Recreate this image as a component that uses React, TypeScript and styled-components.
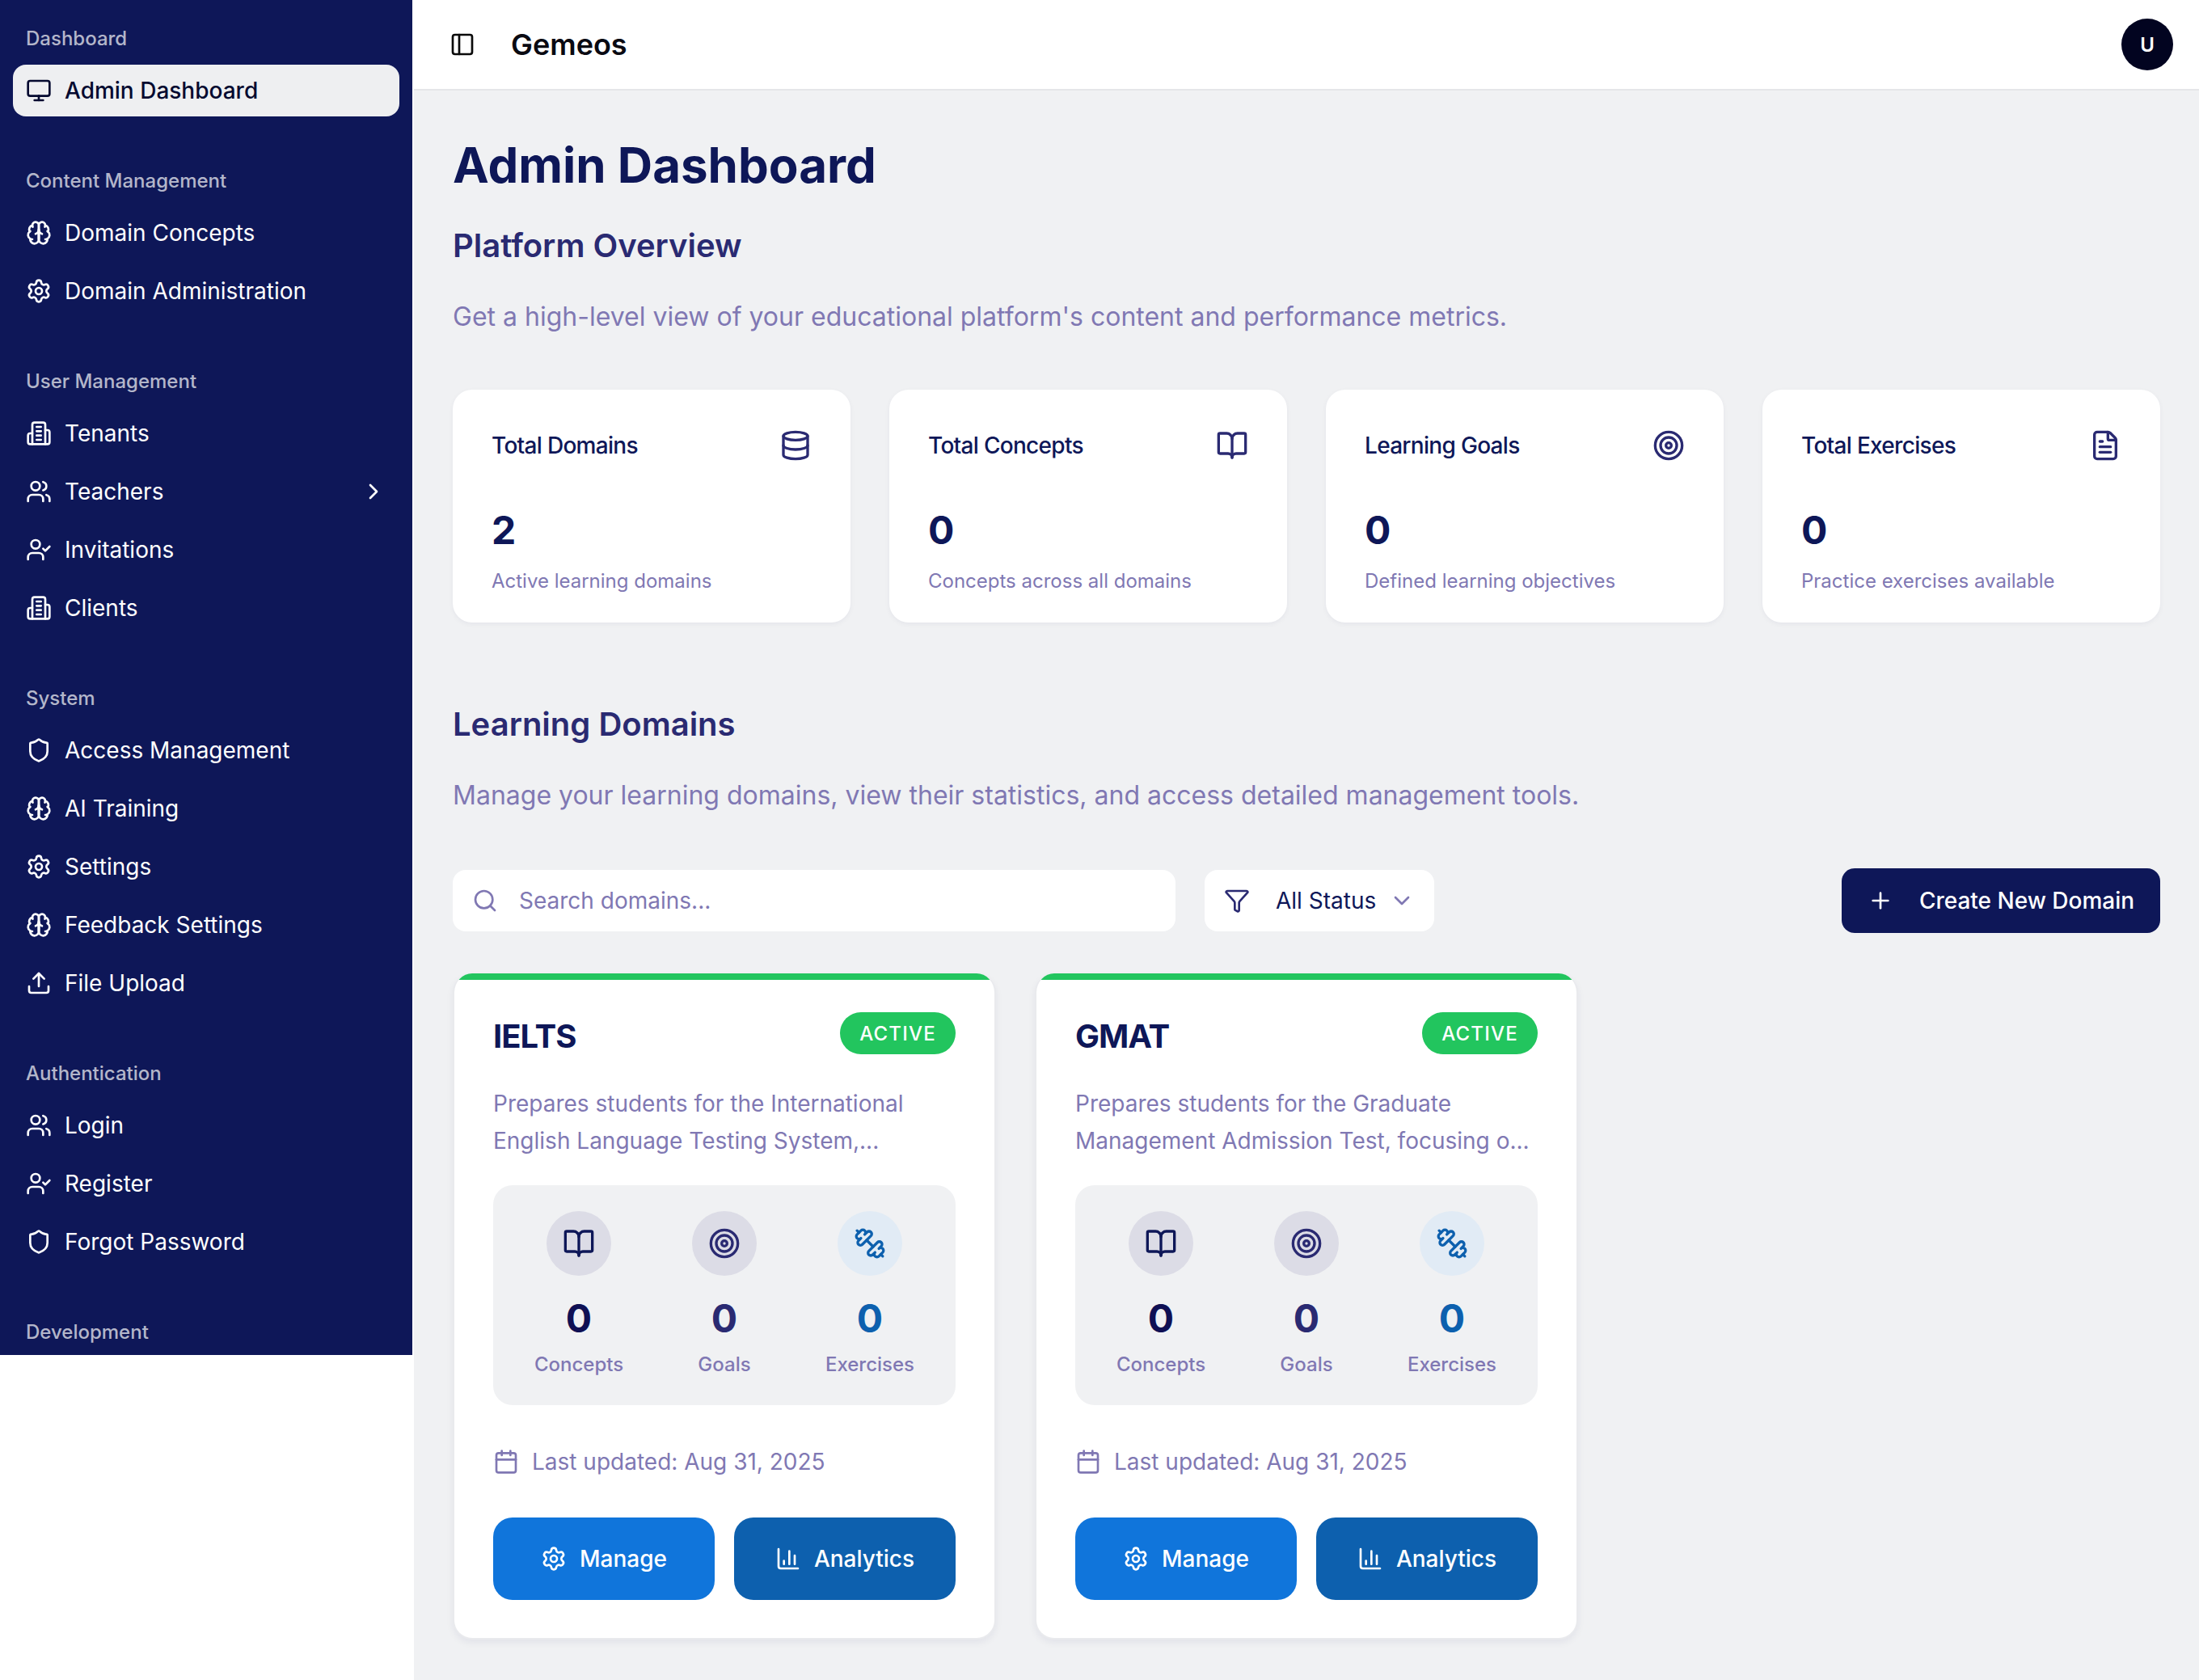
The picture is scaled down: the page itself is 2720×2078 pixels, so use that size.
import type { ComponentType } from 'react';
import styled, { createGlobalStyle } from 'styled-components';
import {
  BookOpen,
  Calendar,
  ChartColumn,
  ChevronDown,
  ChevronRight,
  Database,
  FileText,
  Funnel,
  Monitor,
  PanelLeft,
  Plus,
  Search,
  Settings,
  Shield,
  Target,
  Upload,
  UserCheck,
  Users,
} from 'lucide-react';

const NAVY = '#0e1758';
const INDIGO = '#2a2a72';
const MUTED = '#8078b3';
const BLUE = '#0d60ae';

const GlobalStyle = createGlobalStyle`
  * { box-sizing: border-box; }
  html, body {
    margin: 0;
    background: #fff;
    font-family: Inter, "Liberation Sans", sans-serif;
  }
`;

const Page = styled.div`
  width: 2720px;
  height: 2078px;
  display: grid;
  grid-template-columns: 512px 1fr;
  overflow: hidden;
`;

const SidebarColumn = styled.aside`
  background: #fff;
`;

const Sidebar = styled.nav`
  width: 510px;
  height: 1676px;
  overflow: hidden;
  background: ${NAVY};
  display: flex;
  flex-direction: column;
  gap: 16px;
`;

const NavGroup = styled.div`
  padding: 16px;
  display: flex;
  flex-direction: column;
`;

const NavLabel = styled.div`
  height: 64px;
  padding: 0 16px 2px;
  display: flex;
  align-items: center;
  font-size: 24px;
  font-weight: 500;
  color: rgba(255, 255, 255, 0.7);
`;

const NavList = styled.div`
  display: flex;
  flex-direction: column;
  gap: 8px;
`;

const NavItem = styled.a<{ $active?: boolean }>`
  height: 64px;
  padding: 0 16px;
  border-radius: 16px;
  display: flex;
  align-items: center;
  gap: 16px;
  font-size: 28px;
  font-weight: ${({ $active }) => ($active ? 500 : 400)};
  background: ${({ $active }) => ($active ? '#eeeff1' : 'transparent')};
  color: ${({ $active }) => ($active ? '#050a30' : '#fff')};
`;

const NavText = styled.span`
  flex: 1;
`;

const Main = styled.main`
  background: #f0f1f3;
  min-width: 0;
`;

const Header = styled.header`
  height: 112px;
  background: #fff;
  border-bottom: 2px solid #e5e6e9;
  padding: 0 32px 0 44px;
  display: flex;
  align-items: center;
  gap: 44px;
  color: #0a0a0a;
`;

const Brand = styled.div`
  flex: 1;
  font-size: 36px;
  font-weight: 600;
  color: #0a0a12;
`;

const Avatar = styled.div`
  width: 64px;
  height: 64px;
  border-radius: 50%;
  background: #020420;
  color: #fff;
  font-size: 24px;
  font-weight: 600;
  display: flex;
  align-items: center;
  justify-content: center;
`;

const Content = styled.div`
  padding: 56px 48px 48px;
`;

const Title = styled.h1`
  margin: 0;
  font-size: 60px;
  line-height: 72px;
  font-weight: 700;
  color: ${NAVY};
`;

const SectionTitle = styled.h2<{ $top: number }>`
  margin: ${({ $top }) => $top}px 0 0;
  font-size: 40px;
  line-height: 64px;
  font-weight: 600;
  color: ${INDIGO};
`;

const SectionText = styled.p`
  margin: 32px 0 0;
  font-size: 32px;
  line-height: 48px;
  color: ${MUTED};
`;

const StatGrid = styled.div`
  margin-top: 66px;
  display: grid;
  grid-template-columns: repeat(4, 1fr);
  gap: 48px;
`;

const StatCard = styled.div`
  height: 288px;
  padding: 48px;
  background: #fff;
  border-radius: 24px;
  box-shadow: 0 2px 6px rgba(14, 23, 88, 0.05);
`;

const StatHead = styled.div`
  display: flex;
  align-items: center;
  justify-content: space-between;
  height: 40px;
  margin-top: 1px;
  font-size: 28px;
  font-weight: 500;
  letter-spacing: -0.7px;
  color: ${NAVY};
  svg {
    color: ${INDIGO};
  }
`;

const StatValue = styled.div`
  margin-top: 57px;
  font-size: 48px;
  line-height: 56px;
  font-weight: 700;
  color: ${NAVY};
`;

const StatNote = styled.div`
  margin-top: 19px;
  font-size: 24px;
  line-height: 32px;
  color: ${MUTED};
`;

const Toolbar = styled.div`
  margin-top: 66px;
  height: 80px;
  display: flex;
  align-items: center;
  gap: 36px;
`;

const SearchBox = styled.div`
  width: 894px;
  height: 76px;
  padding: 0 24px;
  background: #fff;
  border-radius: 16px;
  display: flex;
  align-items: center;
  gap: 26px;
  font-size: 28px;
  color: ${MUTED};
`;

const StatusSelect = styled.div`
  width: 284px;
  height: 76px;
  padding: 0 24px;
  background: #fff;
  border-radius: 16px;
  display: flex;
  align-items: center;
  white-space: nowrap;
  font-size: 28px;
  color: ${NAVY};
  svg {
    flex: none;
  }
  svg:first-child {
    color: ${INDIGO};
    margin-right: 32px;
  }
  svg:last-child {
    color: ${MUTED};
    margin-left: 16px;
  }
`;

const CreateButton = styled.button`
  margin-left: auto;
  width: 394px;
  height: 80px;
  border: none;
  border-radius: 16px;
  background: ${NAVY};
  color: #fff;
  font-family: inherit;
  font-size: 28px;
  font-weight: 500;
  display: flex;
  align-items: center;
  justify-content: center;
  gap: 32px;
`;

const DomainGrid = styled.div`
  margin-top: 50px;
  display: grid;
  grid-template-columns: repeat(3, 1fr);
  gap: 48px;
`;

const DomainCard = styled.article`
  position: relative;
  overflow: hidden;
  height: 824px;
  padding: 48px 48px 0;
  background: #fff;
  border: 2px solid #e9eaed;
  border-top: none;
  border-radius: 24px;
  box-shadow: 0 4px 10px rgba(14, 23, 88, 0.06);
  &::before {
    content: '';
    position: absolute;
    top: 0;
    left: 0;
    right: 0;
    height: 8px;
    background: #22c55e;
  }
`;

const DomainHead = styled.div`
  display: flex;
  align-items: flex-start;
  justify-content: space-between;
`;

const DomainName = styled.h3`
  margin: 0;
  padding-top: 4px;
  font-size: 40px;
  line-height: 52px;
  font-weight: 700;
  letter-spacing: -1px;
  color: ${NAVY};
`;

const Badge = styled.span`
  width: 143px;
  height: 52px;
  border-radius: 26px;
  background: #22c55e;
  color: #fff;
  font-size: 24px;
  font-weight: 500;
  letter-spacing: 1.2px;
  display: flex;
  align-items: center;
  justify-content: center;
`;

const DomainText = styled.p`
  margin: 34px 0 0;
  font-size: 28px;
  line-height: 46px;
  color: ${MUTED};
`;

const MetricBox = styled.div`
  margin-top: 32px;
  height: 272px;
  padding: 32px;
  border-radius: 24px;
  background: #f0f1f3;
  display: grid;
  grid-template-columns: repeat(3, 1fr);
  gap: 32px;
`;

const Metric = styled.div`
  display: flex;
  flex-direction: column;
  align-items: center;
`;

const MetricIcon = styled.div<{ $tint: string; $color: string }>`
  width: 80px;
  height: 80px;
  border-radius: 50%;
  background: ${({ $tint }) => $tint};
  color: ${({ $color }) => $color};
  display: flex;
  align-items: center;
  justify-content: center;
`;

const MetricValue = styled.div<{ $color: string }>`
  margin-top: 23px;
  font-size: 48px;
  line-height: 60px;
  font-weight: 700;
  color: ${({ $color }) => $color};
`;

const MetricLabel = styled.div`
  margin-top: 11px;
  font-size: 24px;
  line-height: 32px;
  font-weight: 500;
  color: ${MUTED};
`;

const Updated = styled.div`
  margin-top: 50px;
  display: flex;
  align-items: center;
  gap: 16px;
  font-size: 28px;
  line-height: 40px;
  color: ${MUTED};
`;

const ActionRow = styled.div`
  margin-top: 49px;
  display: grid;
  grid-template-columns: 1fr 1fr;
  gap: 24px;
`;

const ActionButton = styled.button<{ $bg: string }>`
  height: 102px;
  border: none;
  border-radius: 24px;
  background: ${({ $bg }) => $bg};
  color: #fff;
  font-family: inherit;
  font-size: 28px;
  font-weight: 500;
  display: flex;
  align-items: center;
  justify-content: center;
  gap: 16px;
`;

type IconProps = { size?: number };

// these three come from an older lucide drawing than the installed package has
const lineIcon = (paths: string[]): ComponentType<IconProps> =>
  function LineIcon({ size = 32 }: IconProps) {
    return (
      <svg
        width={size}
        height={size}
        viewBox="0 0 24 24"
        fill="none"
        stroke="currentColor"
        strokeWidth={2}
        strokeLinecap="round"
        strokeLinejoin="round"
      >
        {paths.map((d) => (
          <path key={d} d={d} />
        ))}
      </svg>
    );
  };

const BrainIcon = lineIcon([
  'M12 5a3 3 0 1 0-5.997.125 4 4 0 0 0-2.526 5.77 4 4 0 0 0 .556 6.588A4 4 0 1 0 12 18Z',
  'M12 5a3 3 0 1 1 5.997.125 4 4 0 0 1 2.526 5.77 4 4 0 0 1-.556 6.588A4 4 0 1 1 12 18Z',
  'M15 13a4.5 4.5 0 0 1-3-4 4.5 4.5 0 0 1-3 4',
  'M12 9v9',
  'M17.599 6.5a3 3 0 0 0 .399-1.375',
  'M6.003 5.125A3 3 0 0 0 6.401 6.5',
  'M3.477 10.896a4 4 0 0 1 .585-.396',
  'M19.938 10.5a4 4 0 0 1 .585.396',
  'M6 18a4 4 0 0 1-1.967-.516',
  'M19.967 17.484A4 4 0 0 1 18 18',
]);

const TenantIcon = lineIcon([
  'M6 22V4a2 2 0 0 1 2-2h8a2 2 0 0 1 2 2v18Z',
  'M6 12H4a2 2 0 0 0-2 2v6a2 2 0 0 0 2 2h2',
  'M18 9h2a2 2 0 0 1 2 2v9a2 2 0 0 1-2 2h-2',
  'M10 6h4',
  'M10 10h4',
  'M10 14h4',
  'M10 18h4',
]);

const DumbbellIcon = lineIcon([
  'M14.4 14.4 9.6 9.6',
  'M18.657 21.485a2 2 0 1 1-2.829-2.828l-1.767 1.768a2 2 0 1 1-2.829-2.829l6.364-6.364a2 2 0 1 1 2.829 2.829l-1.768 1.767a2 2 0 1 1 2.828 2.829z',
  'm21.5 21.5-1.4-1.4',
  'M3.9 3.9 2.5 2.5',
  'M6.404 12.768a2 2 0 1 1-2.829-2.829l1.768-1.767a2 2 0 1 1-2.828-2.829l2.828-2.828a2 2 0 1 1 2.829 2.828l1.767-1.768a2 2 0 1 1 2.829 2.829z',
]);

interface NavEntry {
  label: string;
  icon: ComponentType<IconProps>;
  active?: boolean;
  more?: boolean;
}

const navGroups: { title: string; items: NavEntry[] }[] = [
  { title: 'Dashboard', items: [{ label: 'Admin Dashboard', icon: Monitor, active: true }] },
  {
    title: 'Content Management',
    items: [
      { label: 'Domain Concepts', icon: BrainIcon },
      { label: 'Domain Administration', icon: Settings },
    ],
  },
  {
    title: 'User Management',
    items: [
      { label: 'Tenants', icon: TenantIcon },
      { label: 'Teachers', icon: Users, more: true },
      { label: 'Invitations', icon: UserCheck },
      { label: 'Clients', icon: TenantIcon },
    ],
  },
  {
    title: 'System',
    items: [
      { label: 'Access Management', icon: Shield },
      { label: 'AI Training', icon: BrainIcon },
      { label: 'Settings', icon: Settings },
      { label: 'Feedback Settings', icon: BrainIcon },
      { label: 'File Upload', icon: Upload },
    ],
  },
  {
    title: 'Authentication',
    items: [
      { label: 'Login', icon: Users },
      { label: 'Register', icon: UserCheck },
      { label: 'Forgot Password', icon: Shield },
    ],
  },
  { title: 'Development', items: [] },
];

const stats = [
  { title: 'Total Domains', value: '2', note: 'Active learning domains', icon: Database },
  { title: 'Total Concepts', value: '0', note: 'Concepts across all domains', icon: BookOpen },
  { title: 'Learning Goals', value: '0', note: 'Defined learning objectives', icon: Target },
  { title: 'Total Exercises', value: '0', note: 'Practice exercises available', icon: FileText },
];

const domains = [
  {
    name: 'IELTS',
    text: 'Prepares students for the International English Language Testing System,...',
  },
  {
    name: 'GMAT',
    text: 'Prepares students for the Graduate Management Admission Test, focusing o...',
  },
];

const metrics = [
  { label: 'Concepts', icon: BookOpen, tint: '#dcdce6', color: NAVY, value: '#0f1054' },
  { label: 'Goals', icon: Target, tint: '#dcdce6', color: INDIGO, value: INDIGO },
  { label: 'Exercises', icon: DumbbellIcon, tint: '#e1ebf5', color: BLUE, value: BLUE },
];

function App(): JSX.Element {
  return (
    <Page>
      <GlobalStyle />
      <SidebarColumn>
        <Sidebar>
          {navGroups.map((group) => (
            <NavGroup key={group.title}>
              <NavLabel>{group.title}</NavLabel>
              <NavList>
                {group.items.map((item) => (
                  <NavItem key={item.label} $active={item.active}>
                    <item.icon size={32} />
                    <NavText>{item.label}</NavText>
                    {item.more && <ChevronRight size={32} />}
                  </NavItem>
                ))}
              </NavList>
            </NavGroup>
          ))}
        </Sidebar>
      </SidebarColumn>
      <Main>
        <Header>
          <PanelLeft size={32} />
          <Brand>Gemeos</Brand>
          <Avatar>U</Avatar>
        </Header>
        <Content>
          <Title>Admin Dashboard</Title>
          <SectionTitle $top={32}>Platform Overview</SectionTitle>
          <SectionText>
            Get a high-level view of your educational platform's content and performance metrics.
          </SectionText>
          <StatGrid>
            {stats.map((stat) => (
              <StatCard key={stat.title}>
                <StatHead>
                  {stat.title}
                  <stat.icon size={40} />
                </StatHead>
                <StatValue>{stat.value}</StatValue>
                <StatNote>{stat.note}</StatNote>
              </StatCard>
            ))}
          </StatGrid>
          <SectionTitle $top={94}>Learning Domains</SectionTitle>
          <SectionText>
            Manage your learning domains, view their statistics, and access detailed management tools.
          </SectionText>
          <Toolbar>
            <SearchBox>
              <Search size={32} />
              Search domains...
            </SearchBox>
            <StatusSelect>
              <Funnel size={32} />
              All Status
              <ChevronDown size={32} />
            </StatusSelect>
            <CreateButton>
              <Plus size={32} />
              Create New Domain
            </CreateButton>
          </Toolbar>
          <DomainGrid>
            {domains.map((domain) => (
              <DomainCard key={domain.name}>
                <DomainHead>
                  <DomainName>{domain.name}</DomainName>
                  <Badge>ACTIVE</Badge>
                </DomainHead>
                <DomainText>{domain.text}</DomainText>
                <MetricBox>
                  {metrics.map((metric) => (
                    <Metric key={metric.label}>
                      <MetricIcon $tint={metric.tint} $color={metric.color}>
                        <metric.icon size={40} />
                      </MetricIcon>
                      <MetricValue $color={metric.value}>0</MetricValue>
                      <MetricLabel>{metric.label}</MetricLabel>
                    </Metric>
                  ))}
                </MetricBox>
                <Updated>
                  <Calendar size={32} />
                  Last updated: Aug 31, 2025
                </Updated>
                <ActionRow>
                  <ActionButton $bg="#1075db">
                    <Settings size={32} />
                    Manage
                  </ActionButton>
                  <ActionButton $bg={BLUE}>
                    <ChartColumn size={32} />
                    Analytics
                  </ActionButton>
                </ActionRow>
              </DomainCard>
            ))}
          </DomainGrid>
        </Content>
      </Main>
    </Page>
  );
}

export default App;
